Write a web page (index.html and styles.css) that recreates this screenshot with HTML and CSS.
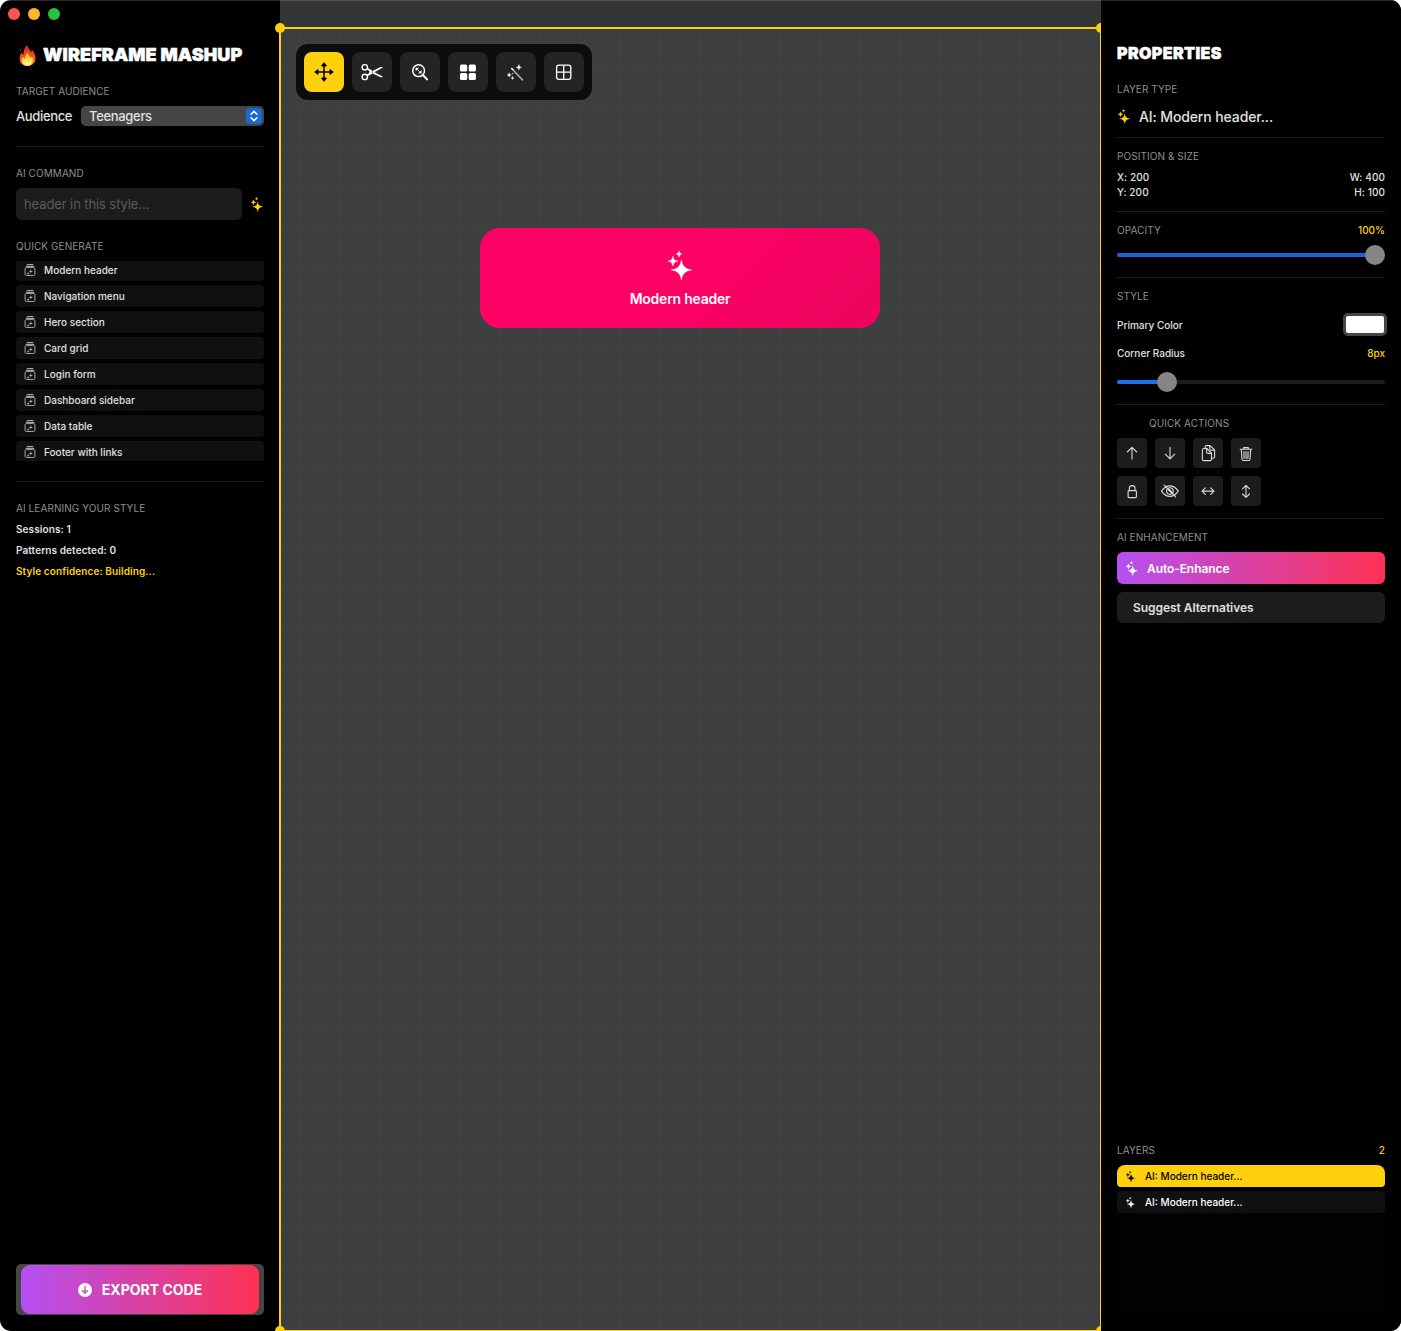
FILE: index.html
```html
<!DOCTYPE html>
<html lang="en">
<head>
<meta charset="utf-8">
<title>Wireframe Mashup</title>
<link rel="stylesheet" href="styles.css">
</head>
<body>
<svg class="defs" aria-hidden="true">
  <symbol id="sparkles" viewBox="0 0 24 29">
    <path d="M13.4 8.8Q14.2 18 23.6 18.9Q14.2 19.8 13.4 29Q12.6 19.8 3.2 18.9Q12.6 18 13.4 8.8Z" stroke="currentColor" stroke-width=".5"/>
    <path d="M4.9 5.2Q5.4 9.7 9.9 10.1Q5.4 10.6 4.9 15Q4.4 10.6 0 10.1Q4.4 9.7 4.9 5.2Z" stroke="currentColor" stroke-width=".5"/>
    <path d="M11 0Q11.4 2.7 14 3Q11.4 3.3 11 6Q10.6 3.3 8 3Q10.6 2.7 11 0Z" stroke="currentColor" stroke-width=".4"/>
  </symbol>
  <symbol id="stack" viewBox="0 0 12 12">
    <path d="M2.8 .1H9.2V1.1H2.8ZM1.8 1.8H10.2V3H1.8Z"/>
    <rect x="1.1" y="3.6" width="9.8" height="7.9" rx="1.3" fill="none" stroke="currentColor" stroke-width="1"/>
    <path d="M6.8 5.2L7.4 6.8L9 7.4L7.4 8L6.8 9.6L6.2 8L4.6 7.4L6.2 6.8ZM4.1 7.9L4.6 8.9L5.6 9.4L4.6 9.9L4.1 10.9L3.6 9.9L2.6 9.4L3.6 8.9Z"/>
  </symbol>
</svg>
<div class="window">
  <aside class="sidebar">
    <div class="traffic"><i class="close"></i><i class="minimize"></i><i class="zoom"></i></div>
    <h1 class="brand">
      <svg class="flame" viewBox="0 0 17 21">
        <defs>
          <linearGradient id="fire" x1="0" y1="0" x2="0" y2="1"><stop offset="0" stop-color="#d9291c"/><stop offset=".55" stop-color="#f4511e"/><stop offset="1" stop-color="#ff9a1f"/></linearGradient>
          <linearGradient id="core" x1="0" y1="0" x2="0" y2="1"><stop offset="0" stop-color="#ff9b21"/><stop offset=".5" stop-color="#ffd93b"/><stop offset="1" stop-color="#fff7b0"/></linearGradient>
        </defs>
        <path fill="url(#fire)" d="M8.2 0C8.6 3 11 4.6 12.2 7.2C12.8 6.4 12.8 5.2 12.4 4.4C14.8 6.6 16.6 9.6 16.5 13.2C16.4 17.8 13 21 8.5 21C3.9 21 .6 17.8 .6 13.4C.6 10.6 1.8 8.8 2.8 7.2C3.1 8.6 3.5 9.2 4.4 9.8C4.3 5.8 5.5 2.4 8.2 0Z"/>
        <path fill="#e5391d" d="M1 3.5Q2.6 4.2 2.2 6Q.8 5.8 1 3.5Z"/>
        <path fill="url(#core)" d="M9 7.5C9.2 10 11.2 11 11.8 13C12.4 12.4 12.7 11.7 12.7 11C14.2 13.3 14.4 16 12.9 18.2C11.9 19.8 10.3 20.6 8.5 20.6C5.4 20.6 3 18.5 3 15.5C3 13.8 3.6 12.6 4.3 11.7C4.7 12.8 5.2 13.4 6 13.7C6 11.2 6.8 9.2 9 7.5Z"/>
      </svg>
      <span class="brand-name">WIREFRAME MASHUP</span>
    </h1>
    <div class="label">TARGET AUDIENCE</div>
    <div class="audience">
      <span class="audience-name">Audience</span>
      <div class="select"><span>Teenagers</span>
        <svg class="stepper" viewBox="0 0 16 16"><path d="M5 6.2L8 3.4L11 6.2M5 9.8L8 12.6L11 9.8"/></svg>
      </div>
    </div>
    <hr class="rule audience-rule">
    <div class="label">AI COMMAND</div>
    <div class="command">
      <div class="input">header in this style...</div>
      <svg class="spark gold"><use href="#sparkles"/></svg>
    </div>
    <div class="label">QUICK GENERATE</div>
    <div class="generate">
      <div class="gen"><svg><use href="#stack"/></svg>Modern header</div>
      <div class="gen"><svg><use href="#stack"/></svg>Navigation menu</div>
      <div class="gen"><svg><use href="#stack"/></svg>Hero section</div>
      <div class="gen"><svg><use href="#stack"/></svg>Card grid</div>
      <div class="gen"><svg><use href="#stack"/></svg>Login form</div>
      <div class="gen"><svg><use href="#stack"/></svg>Dashboard sidebar</div>
      <div class="gen"><svg><use href="#stack"/></svg>Data table</div>
      <div class="gen"><svg><use href="#stack"/></svg>Footer with links</div>
    </div>
    <hr class="rule learn-rule">
    <div class="label">AI LEARNING YOUR STYLE</div>
    <div class="stats">
      <div>Sessions: 1</div>
      <div>Patterns detected: 0</div>
      <div class="gold">Style confidence: Building...</div>
    </div>
    <div class="export">
      <div class="export-fill">
        <svg viewBox="0 0 14 14"><circle cx="7" cy="7" r="7" fill="#fff"/><path d="M7 3.6V10M4.4 7.6L7 10.2L9.6 7.6" fill="none" stroke="#c850c8" stroke-width="1.4" stroke-linecap="round" stroke-linejoin="round"/></svg>
        <span>EXPORT CODE</span>
      </div>
    </div>
  </aside>

  <main class="workspace">
    <div class="titlebar"></div>
    <div class="canvas">
      <div class="toolbar">
        <div class="tool active"><svg viewBox="0 0 40 40"><path d="M20 12V28M12 20H28" fill="none" stroke="#000" stroke-width="1.5"/><path d="M20 10.6L22.6 14H17.4ZM20 29.4L22.6 26H17.4ZM10.6 20L14 17.4V22.6ZM29.4 20L26 17.4V22.6Z" fill="#000" stroke="#000" stroke-width=".8" stroke-linejoin="round"/></svg></div>
        <div class="tool"><svg viewBox="0 0 40 40"><g fill="none" stroke="#fff" stroke-width="1.4"><circle cx="12.8" cy="15.3" r="2.7"/><circle cx="12.8" cy="24.9" r="2.7"/><path d="M15.3 16.8L19.6 19.3M15.3 23.4L19.6 20.9" stroke-width="1.8"/></g><path d="M17.7 18.2L20 19.2L28 15.2Q30 14.5 31 15.4L22 20.5L18.3 22.3L17 21.5Z" fill="#fff"/><path d="M18.2 18.2L22.3 20.1L31 24.7Q30 25.8 28 25L19 20.8Z" fill="#fff"/><circle cx="20.5" cy="20.1" r=".65" fill="#222"/></svg></div>
        <div class="tool"><svg viewBox="0 0 40 40"><circle cx="18.6" cy="18.7" r="5.9" fill="none" stroke="#fff" stroke-width="1.5"/><path d="M23.1 23.2L27.1 27.4" stroke="#fff" stroke-width="2.1" stroke-linecap="round"/><path d="M15.6 15.7H19.1L15.6 19.2ZM21.6 21.6H18.1L21.6 18.1Z" fill="#fff"/><path d="M17 17.1L20.2 20.3" stroke="#fff" stroke-width=".8"/></svg></div>
        <div class="tool"><svg viewBox="0 0 40 40"><g fill="#fff"><rect x="12" y="12.5" width="7.2" height="7.1" rx="1.6"/><rect x="20.7" y="12.5" width="7.2" height="7.1" rx="1.6"/><rect x="12" y="21" width="7.2" height="7.1" rx="1.6"/><rect x="20.7" y="21" width="7.2" height="7.1" rx="1.6"/></g></svg></div>
        <div class="tool"><svg viewBox="0 0 40 40"><path d="M18.1 19L26.5 27.9" stroke="#aaa" stroke-width="1.6" stroke-linecap="round"/><path d="M15.8 16.6L17.2 18" stroke="#fff" stroke-width="1.6" stroke-linecap="round"/><path d="M22.9 12.4Q23.2 15 25.6 15.3Q23.2 15.6 22.9 18.1Q22.6 15.6 20 15.3Q22.6 15 22.9 12.4ZM13.2 20.8Q13.5 22.6 15.3 22.9Q13.5 23.2 13.2 25Q12.9 23.2 11 22.9Q12.9 22.6 13.2 20.8ZM16.5 24.4Q16.8 25.7 17.9 26Q16.8 26.3 16.5 27.6Q16.2 26.3 15 26Q16.2 25.7 16.5 24.4Z" fill="#fff" stroke="#fff" stroke-width=".3"/><circle cx="16.8" cy="21.6" r=".6" fill="#fff"/></svg></div>
        <div class="tool"><svg viewBox="0 0 40 40"><g fill="none" stroke="#fff" stroke-width="1.3"><rect x="12.6" y="13.1" width="14.2" height="14.2" rx="2.2"/><path d="M19.7 13V27.4M12.6 20.2H26.8"/></g></svg></div>
      </div>
      <div class="component">
        <svg class="spark-lg"><use href="#sparkles"/></svg>
        <span>Modern header</span>
      </div>
    </div>
    <div class="selection"><i class="handle tl"></i><i class="handle tr"></i><i class="handle bl"></i><i class="handle br"></i></div>
  </main>

  <aside class="inspector">
    <h2 class="heading">PROPERTIES</h2>
    <div class="label">LAYER TYPE</div>
    <div class="layer-type"><svg class="spark gold"><use href="#sparkles"/></svg><span>AI: Modern header...</span></div>
    <hr class="rule">
    <div class="label">POSITION &amp; SIZE</div>
    <div class="geometry">
      <div><span>X: 200</span><span>W: 400</span></div>
      <div><span>Y: 200</span><span>H: 100</span></div>
    </div>
    <hr class="rule">
    <div class="label split"><span>OPACITY</span><b class="value">100%</b></div>
    <div class="slider opacity"><div class="track"><div class="fill" style="width:250px"></div></div><i class="knob" style="left:248px"></i></div>
    <hr class="rule">
    <div class="label">STYLE</div>
    <div class="prop color-row"><span>Primary Color</span><div class="swatch"></div></div>
    <div class="prop radius-row"><span>Corner Radius</span><b class="value">8px</b></div>
    <div class="slider radius"><div class="track"><div class="fill" style="width:50px"></div></div><i class="knob" style="left:40px"></i></div>
    <hr class="rule">
    <div class="label indent">QUICK ACTIONS</div>
    <div class="actions">
      <div class="act"><svg viewBox="0 0 30 30"><path d="M15 21V9.5M10.3 14L15 9.3L19.7 14"/></svg></div>
      <div class="act"><svg viewBox="0 0 30 30"><path d="M15 9.3V20.8M10.3 16.2L15 20.9L19.7 16.2"/></svg></div>
      <div class="act"><svg viewBox="0 0 30 30"><path d="M12.2 10V9Q12.2 7.6 13.6 7.6H17L21.6 12V18.8Q21.6 20.2 20.2 20.2H18.8M16.8 7.8V11Q16.8 12.2 18 12.2H21.4"/><path d="M10.8 10.5H13.8L18.5 15.2V21.2Q18.5 22.6 17.1 22.6H10.8Q9.4 22.6 9.4 21.2V11.9Q9.4 10.5 10.8 10.5ZM13.6 10.7V14Q13.6 15.4 15 15.4H18.3"/></svg></div>
      <div class="act"><svg viewBox="0 0 30 30"><path d="M9.2 11.3H20.8M12.7 11V9.6H17.3V11M10.3 11.5L11 21.3Q11.1 22.5 12.3 22.5H17.7Q18.9 22.5 19 21.3L19.7 11.5M12.9 13.5L13.1 20.5M15 13.5V20.5M17.1 13.5L16.9 20.5"/></svg></div>
      <div class="act"><svg viewBox="0 0 30 30"><rect x="11.1" y="14.6" width="8.3" height="7" rx=".9"/><path d="M12.4 14.5V12Q12.4 9.6 15.2 9.6Q18 9.6 18 12V14.5"/></svg></div>
      <div class="act"><svg viewBox="0 0 30 30"><path d="M6.5 15.1Q10.3 9.9 14.8 9.9Q19.5 9.9 23.3 15.1Q19.5 20.4 14.8 20.4Q10.3 20.4 6.5 15.1Z"/><circle cx="14.9" cy="15.1" r="3.3"/><path d="M9.2 9.2L20.7 20.8"/><path d="M13.8 13.5L17 16.7" stroke-width="1.8"/></svg></div>
      <div class="act"><svg viewBox="0 0 30 30"><path d="M9.2 15.1H20.8M12.3 11.8L9 15.1L12.3 18.4M17.7 11.8L21 15.1L17.7 18.4"/></svg></div>
      <div class="act"><svg viewBox="0 0 30 30"><path d="M15 9.5V21.2M11.5 12.8L15 9.4L18.5 12.8M11.5 18L15 21.4L18.5 18"/></svg></div>
    </div>
    <hr class="rule">
    <div class="label">AI ENHANCEMENT</div>
    <div class="enhance"><svg class="spark"><use href="#sparkles"/></svg>Auto-Enhance</div>
    <div class="suggest">Suggest Alternatives</div>
    <div class="layers">
      <div class="label split"><span>LAYERS</span><b class="value">2</b></div>
      <div class="layer-list">
        <div class="layer selected"><svg><use href="#sparkles"/></svg>AI: Modern header...</div>
        <div class="layer"><svg><use href="#sparkles"/></svg>AI: Modern header...</div>
      </div>
    </div>
  </aside>
</div>
</body>
</html>
```

FILE: styles.css
```css
* { box-sizing: border-box; }
body { margin: 0; background: #fff; font-family: Inter, "Liberation Sans", sans-serif; }
.defs { position: absolute; width: 0; height: 0; }
svg { display: block; flex: none; fill: currentColor; }

.window {
  position: relative;
  display: grid;
  grid-template-columns: 280px 821px 300px;
  width: 1401px;
  height: 1331px;
  overflow: hidden;
  border-radius: 11px;
  background: #000;
}
.window::after {
  content: "";
  position: absolute;
  inset: 0 0 auto;
  height: 1px;
  background: rgba(255, 255, 255, .16);
  z-index: 5;
}

/* shared */
.gold, .value { color: #ffd10d; }
.label {
  height: 12px;
  font-size: 10px;
  line-height: 12px;
  letter-spacing: .07px;
  color: #8e8e91;
  white-space: nowrap;
}
.split { display: flex; justify-content: space-between; }
.value { font-weight: 500; letter-spacing: 0; }
.rule { width: 100%; height: 1px; margin: 0; border: 0; background: #1e1e1e; flex: none; }
.spark { width: 12px; height: 15px; }

/* left sidebar */
.sidebar { display: flex; flex-direction: column; padding: 8px 16px 16px; color: #e0e0e0; }
.traffic { display: flex; gap: 8px; height: 12px; margin-left: -8px; }
.traffic i { width: 12px; height: 12px; border-radius: 50%; }
.close { background: #ff5650; }
.minimize { background: #fdb52b; }
.zoom { background: #29c23a; }
.brand { display: flex; align-items: center; height: 24px; margin: 23px 0 18px; padding-left: 3px; color: #fff; }
.flame { width: 17px; height: 21px; margin-right: 7px; }
.brand-name { font-size: 18px; line-height: 24px; font-weight: 900; letter-spacing: .1px; -webkit-text-stroke: .5px #fff; white-space: nowrap; }
.audience { display: flex; align-items: center; justify-content: space-between; height: 20px; margin-top: 9px; }
.audience-name { font-size: 13px; font-weight: 500; letter-spacing: -.36px; color: #e2e2e2; }
.select {
  display: flex;
  align-items: center;
  justify-content: space-between;
  width: 183px;
  height: 20px;
  padding: 0 2px 0 8px;
  border-radius: 5px;
  background: #454545;
  font-size: 13px;
  line-height: 18px;
  font-weight: 500;
  letter-spacing: -.32px;
}
.stepper { width: 16px; height: 16px; border-radius: 4px; background: #1768d8; fill: none; stroke: #fff; stroke-width: 1.5; stroke-linecap: round; stroke-linejoin: round; }
.audience-rule { margin: 20px 0; }
.command { display: flex; align-items: center; gap: 9px; margin: 9px 0 20px; }
.input {
  width: 226px;
  height: 32px;
  padding-left: 8px;
  border-radius: 6px;
  background: #1c1c1c;
  color: #5a5a5a;
  font-size: 13px;
  line-height: 32px;
  letter-spacing: -.1px;
}
.generate { display: flex; flex-direction: column; gap: 4px; height: 200px; margin-top: 9px; overflow: hidden; }
.gen {
  display: flex;
  align-items: center;
  gap: 8px;
  flex: none;
  height: 22px;
  padding-left: 8px;
  border-radius: 4px;
  background: #101010;
  font-size: 10px;
  font-weight: 500;
  letter-spacing: .01px;
}
.gen:first-child { margin-top: -2px; }
.gen svg { width: 12px; height: 12px; color: #a6a6a6; }
.learn-rule { margin: 20px 0; }
.stats { display: flex; flex-direction: column; gap: 9px; margin-top: 9px; font-size: 10px; line-height: 12px; font-weight: 600; letter-spacing: .1px; }
.export { height: 51px; margin-top: auto; padding: 1px 5px; border-radius: 5px; background: #454545; }
.export-fill {
  display: flex;
  align-items: center;
  justify-content: center;
  gap: 10px;
  height: 49px;
  border-radius: 9px;
  background: linear-gradient(90deg, #b450f2, #ff3153);
  color: #fff;
  font-size: 14px;
  font-weight: 700;
}
.export-fill svg { width: 14px; height: 14px; }

/* canvas */
.workspace { position: relative; display: flex; flex-direction: column; background: #3d3e40; }
.titlebar { height: 28px; background: #343537; }
.canvas {
  flex: 1;
  padding: 16px;
  background-color: #3d3e40;
  background-image: linear-gradient(90deg, #3f4042 2px, transparent 2px), linear-gradient(#3f4042 2px, transparent 2px);
  background-size: 20px 20px;
  background-position: -1px -1px;
}
.toolbar { display: flex; gap: 8px; width: 296px; height: 56px; padding: 8px; border-radius: 12px; background: #0c0c0c; }
.tool { width: 40px; height: 40px; border-radius: 8px; background: #242424; }
.tool svg { width: 40px; height: 40px; }
.tool.active { background: #ffd10d; }
.component {
  display: flex;
  flex-direction: column;
  align-items: center;
  gap: 10px;
  width: 400px;
  height: 100px;
  margin: 128px 0 0 184px;
  padding-top: 23px;
  border-radius: 20px;
  background: linear-gradient(135deg, #ff0064 0%, #ff0064 45%, #eb055f 100%);
  color: #fff;
  font-size: 14px;
  line-height: 18px;
  font-weight: 600;
  letter-spacing: -.24px;
}
.spark-lg { width: 24px; height: 29px; }
.selection { position: absolute; left: -1px; top: 27px; width: 822px; height: 1304px; border: 2px solid #ffd10d; border-width: 2px 1px 1px 2px; z-index: 2; }
.handle { position: absolute; width: 10px; height: 10px; border-radius: 50%; background: #ffd10d; }
.tl { left: -6px; top: -6px; }
.tr { right: -6px; top: -6px; }
.bl { left: -6px; bottom: -6px; }
.br { right: -6px; bottom: -6px; }

/* inspector */
.inspector { position: relative; z-index: 3; display: flex; flex-direction: column; padding: 41px 16px 16px; background: #000; color: #e0e0e0; }
.heading { height: 24px; margin: 0 0 18px; color: #fff; font-size: 16px; line-height: 24px; font-weight: 900; letter-spacing: .42px; -webkit-text-stroke: .5px #fff; }
.layer-type { display: flex; align-items: center; gap: 9px; height: 20px; margin: 11px 0; padding-left: 1px; font-size: 14px; font-weight: 500; letter-spacing: -.12px; }
.inspector > .rule + .label { margin-top: 12px; }
.geometry { margin: 8px 0 11px; font-size: 10px; line-height: 15px; font-weight: 500; letter-spacing: .1px; }
.geometry div { display: flex; justify-content: space-between; }
.slider { position: relative; display: flex; align-items: center; height: 20px; }
.track { width: 100%; height: 4px; border-radius: 2px; background: #1c1c1c; }
.fill { height: 4px; border-radius: 2px; background: #1a62e2; }
.radius .fill { background: #1a72e8; }
.knob { position: absolute; top: 0; width: 20px; height: 20px; border-radius: 50%; background: #858585; }
.slider.opacity { margin: 9px 0 12px; }
.prop { display: flex; align-items: center; justify-content: space-between; font-size: 10px; font-weight: 500; }
.color-row { height: 23px; margin-top: 11px; }
.swatch { width: 44px; height: 23px; margin-right: -2px; border: 3px solid #454545; border-radius: 5px; background: #fff; }
.radius-row { height: 12px; margin-top: 11px; }
.slider.radius { margin: 13px 0 12px; }
.indent { padding-left: 32px; }
.actions { display: grid; grid-template-columns: repeat(4, 30px); gap: 8px; margin: 9px 0 12px; }
.act { width: 30px; height: 30px; border-radius: 4px; background: #1c1c1c; }
.act svg { width: 30px; height: 30px; fill: none; stroke: #dcdcdc; stroke-width: 1.1; stroke-linecap: round; stroke-linejoin: round; }
.enhance { display: flex; align-items: center; gap: 9px; height: 32px; margin-top: 9px; padding-left: 9px; border-radius: 6px; background: linear-gradient(90deg, #b450f2, #ff3153); color: #fff; font-size: 12px; font-weight: 600; letter-spacing: -.08px; }
.suggest { height: 31px; margin-top: 8px; padding-left: 16px; border-radius: 6px; background: #1c1c1c; font-size: 12px; line-height: 31px; font-weight: 600; letter-spacing: -.04px; }
.layers { margin-top: auto; }
.layer-list { display: flex; flex-direction: column; gap: 4px; height: 150px; margin-top: 9px; border-radius: 8px; background: #020202; overflow: hidden; }
.layer { display: flex; align-items: center; gap: 10px; height: 22px; padding-left: 9px; border-radius: 4px; background: #101010; color: #fff; font-size: 10px; font-weight: 500; }
.layer svg { width: 9px; height: 11px; }
.layer.selected { background: #ffd10d; color: #000; }
```
